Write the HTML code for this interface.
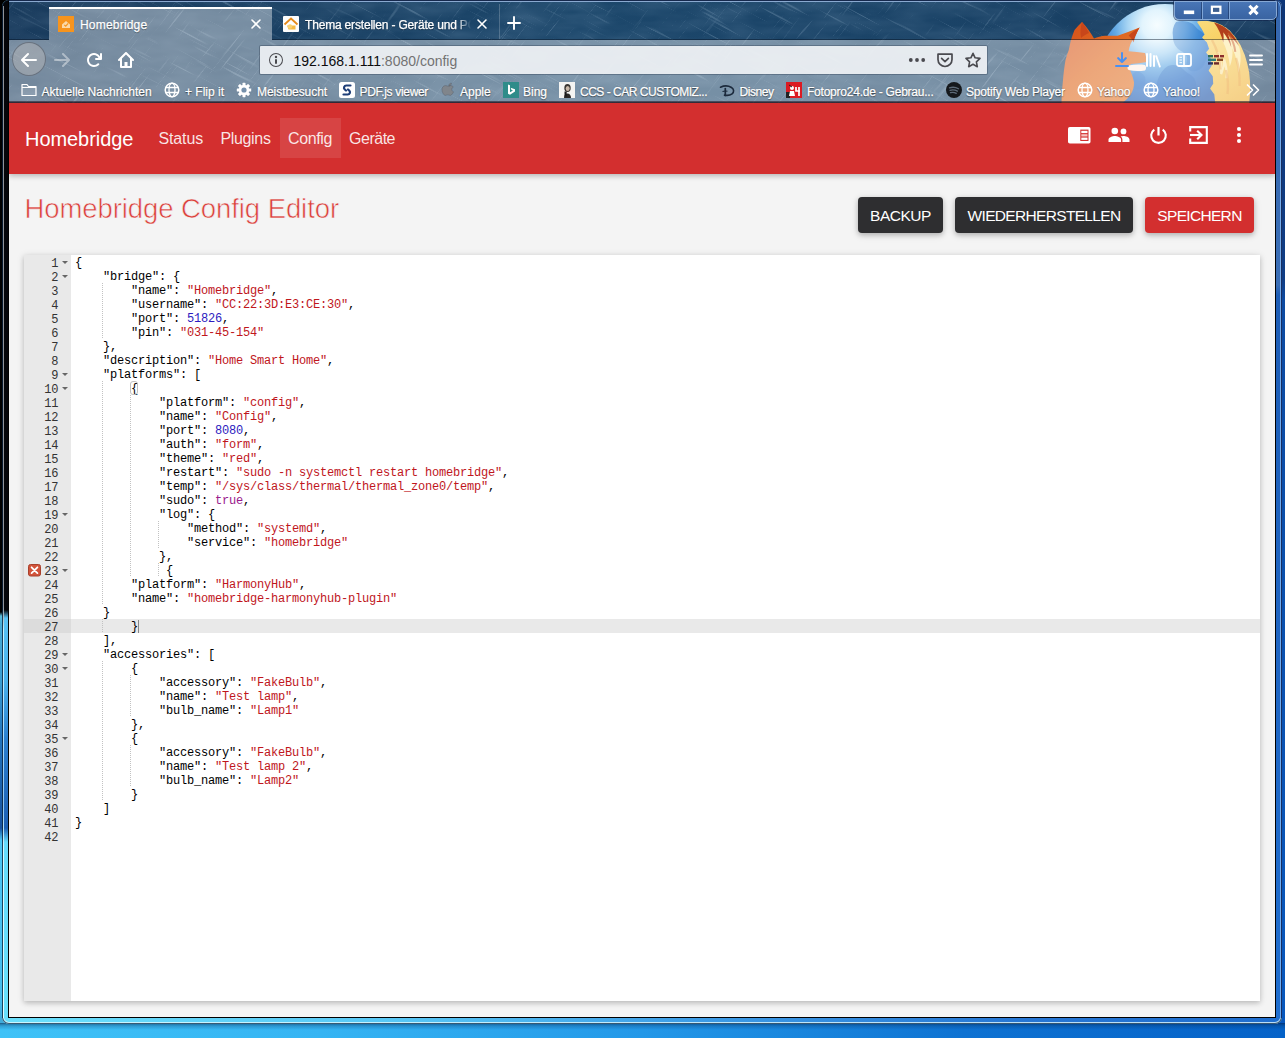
<!DOCTYPE html>
<html><head><meta charset="utf-8"><title>Homebridge</title>
<style>
*{box-sizing:border-box;margin:0;padding:0}
html,body{width:1285px;height:1038px;overflow:hidden;background:#1e9fe8;font-family:"Liberation Sans",sans-serif}
.abs{position:absolute}
#desk{position:absolute;left:0;top:0;width:1285px;height:1038px;background:linear-gradient(90deg,#3fc2f7 0%,#35b4f3 25%,#2398e8 50%,#0e72d2 75%,#0562c8 100%)}
#deskL{position:absolute;left:0;top:0;width:9px;height:1024px;background:linear-gradient(180deg,#000 0,#000 612px,#5cc0dc 616px,#48acd6 624px,#3a9ed2 680px,#2273bc 740px,#17529f 828px,#4cc6f4 840px,#45bcec 1000px,#3fa9d8 1024px)}
#deskR{position:absolute;left:1276px;top:0;width:9px;height:1024px;background:linear-gradient(180deg,#0d3577 0,#0f3d86 280px,#0c4aa2 300px,#0a52b2 700px,#0858be 1024px)}
#deskSh{position:absolute;left:0;top:1023px;width:1285px;height:7px;background:linear-gradient(180deg,rgba(0,30,70,.55),rgba(0,40,90,.22) 45%,rgba(0,40,90,0))}
#win{position:absolute;left:2px;top:0;width:1280px;height:1024px;border-radius:7px 7px 7px 7px;background:linear-gradient(90deg,#6be0fc 0%,#58c8f6 30%,#3c9be6 55%,#2676d4 80%,#1f6ecf 100%);box-shadow:inset 0 0 0 1px rgba(8,40,70,.75),inset 0 0 0 2px rgba(225,250,255,.8)}
#winL{position:absolute;left:2px;top:0;width:7px;height:1018px;border-radius:7px 0 0 0;background:linear-gradient(180deg,#05060a 0,#05060a 610px,#58c2f4 618px,#4ab4ee 680px,#2a7fd0 740px,#1c5fb4 828px,#66dcfc 842px,#68e0fc 1018px);box-shadow:inset 1px 0 0 rgba(8,30,55,.8)}
#winLh{position:absolute;left:3px;top:6px;width:1px;height:1012px;background:linear-gradient(180deg,#8e9297 0,#90949a 600px,#c8f4ff 625px,#b8e6ff 700px,#8fc4f0 800px,#d8faff 845px,#e0fbff 1012px)}
#winR{position:absolute;left:1275px;top:0;width:7px;height:1018px;border-radius:0 7px 0 0;background:linear-gradient(180deg,#3466ae 0,#3a6eb6 285px,#1d5db6 295px,#1f66c4 700px,#1f6ecf 1018px);box-shadow:inset -1px 0 0 rgba(8,25,70,.85),inset -2px 0 0 rgba(140,195,255,.75)}
#winIn{position:absolute;left:8px;top:1px;width:1268px;height:1017px;background:#000}
#chrome{position:absolute;left:9px;top:0;width:1266px;height:103px;background:#1d446f;overflow:hidden}
#navbar{position:absolute;left:0;top:40px;width:1266px;height:62px;background:rgba(255,255,255,.4)}
#navline{position:absolute;left:0;top:101px;width:1266px;height:2px;background:linear-gradient(180deg,rgba(30,35,50,.55),rgba(60,30,35,.8))}
#tab1{position:absolute;left:40px;top:7px;width:223px;height:33px;background:rgba(255,255,255,.4);border-top:2px solid #fff}
#tabsep{position:absolute;left:489.500px;top:4px;width:1px;height:35px;background:rgba(255,255,255,.2)}
#wc{position:absolute;left:1174px;top:1px;width:103px;height:19px;background:linear-gradient(180deg,#4976b6,#3f6bab 55%,#3a64a2);border:1px solid #86a8d4;border-radius:0 0 5px 5px;box-shadow:0 0 0 1px rgba(12,30,70,.55)}
#wc i{position:absolute;top:0;width:1px;height:17px;background:rgba(150,185,230,.75);box-shadow:-1px 0 0 rgba(10,30,70,.45)}
.tabtxt{position:absolute;color:#fff;font-size:12px;white-space:nowrap;text-shadow:0 1px 1px rgba(0,0,0,.45);-webkit-text-stroke:.25px #fff}
#url{position:absolute;left:251px;top:46px;width:727px;height:28px;background:rgba(238,241,244,.93);border-radius:1px;box-shadow:0 0 0 1px rgba(40,55,75,.35)}
#urltxt{left:284.500px;top:53px;font-size:14px;line-height:16px;color:#0c0c0d;white-space:nowrap}
#urltxt span{color:#737373}
.bm{position:absolute;top:84.700px;color:#fff;font-size:12px;line-height:14px;white-space:nowrap;text-shadow:0 1px 1px rgba(0,0,0,.5),0 0 2px rgba(0,0,0,.25);-webkit-text-stroke:.25px #fff}
#page{position:absolute;left:9px;top:103px;width:1266px;height:914px;background:#f4f4f4;overflow:hidden}
#hdr{position:absolute;left:0;top:0;width:1266px;height:70.800px;background:#d32f2f;box-shadow:0 2px 5px rgba(0,0,0,.2),0 1px 8px rgba(0,0,0,.08)}
#brand{position:absolute;left:16px;top:23.700px;color:#fff;font-size:20px;line-height:24px;white-space:nowrap;letter-spacing:-.06px}
.nav{position:absolute;top:27px;color:rgba(255,255,255,.88);font-size:16px;line-height:18px;white-space:nowrap}
#navact{position:absolute;left:270.500px;top:15px;width:61.500px;height:40px;background:rgba(255,255,255,.1)}
#ttl{position:absolute;left:15.500px;top:89px;color:#dc3f3a;-webkit-text-stroke:.6px #f4f4f4;font-size:27.500px;line-height:34px;white-space:nowrap;letter-spacing:-.08px}
.btn{position:absolute;top:94px;height:36px;border-radius:4px;color:#fff;font-size:15.500px;line-height:37px;text-align:center;white-space:nowrap;box-shadow:0 2px 5px rgba(0,0,0,.2),0 2px 8px rgba(0,0,0,.12)}
#ed{position:absolute;left:15px;top:152px;width:1236px;height:746px;background:#fff;box-shadow:0 2px 5px rgba(0,0,0,.18),0 1px 8px rgba(0,0,0,.1);overflow:hidden;font-family:"Liberation Mono",monospace;font-size:12px;letter-spacing:-.2px;line-height:14px}
#gut{position:absolute;left:0;top:0;width:47px;height:746px;background:#e9e9e9;color:#333}
.g{position:relative;height:14px;text-align:right;padding-right:12.800px;padding-top:1.500px}
.g.act{background:#dcdcdc}
.fw{position:absolute;right:3.500px;top:5.500px;width:0;height:0;border-left:3px solid transparent;border-right:3px solid transparent;border-top:3.600px solid #666}
.er{position:absolute;left:4px;top:.500px}
.ig{position:absolute;top:0;width:1px;height:14px;background:repeating-linear-gradient(180deg,#c2c2c2 0,#c2c2c2 1px,transparent 1px,transparent 2px)}
.bmx{position:absolute;left:59px;top:0;width:7.500px;height:14px;border:1px solid #c0c0c0;border-radius:3px}
#code{position:absolute;left:47px;top:0;width:1189px;height:746px;color:#000}
.l{position:relative;height:14px;padding-left:4px;padding-top:1px;white-space:pre}
.l.act{background:#e9e9e9}
#cursor{position:absolute;left:114px;top:365px;width:1px;height:13px;background:#888}
.k{color:#000}.s{color:#c0161c}.n{color:#2d1cc0}.b{color:#9a1a8c}
</style></head><body>
<div id="desk"></div><div id="deskL"></div><div id="deskR"></div><div id="deskSh"></div>
<div id="win"></div><div id="winL"></div><div id="winR"></div><div id="winLh"></div><div id="winIn"></div>
<div id="chrome">
<svg class="abs" style="left:0;top:0" width="1266" height="103" viewBox="9 0 1266 103">
<defs>
<filter id="tx" x="0" y="0" width="100%" height="100%"><feTurbulence type="fractalNoise" baseFrequency="0.02 0.07" numOctaves="3" seed="7"/><feColorMatrix type="matrix" values="0 0 0 0 0.55  0 0 0 0 0.72  0 0 0 0 0.9  0.9 0.9 0 0 -0.62"/></filter>
<filter id="sc1" x="0" y="0" width="100%" height="100%"><feTurbulence type="fractalNoise" baseFrequency="0.018 0.4" numOctaves="2" seed="3"/><feColorMatrix type="matrix" values="0 0 0 0 0.62  0 0 0 0 0.78  0 0 0 0 0.92  6 0 0 0 -3.900"/></filter>
<filter id="sc2" x="0" y="0" width="100%" height="100%"><feTurbulence type="fractalNoise" baseFrequency="0.022 0.45" numOctaves="2" seed="11"/><feColorMatrix type="matrix" values="0 0 0 0 0.62  0 0 0 0 0.78  0 0 0 0 0.92  6 0 0 0 -3.950"/></filter>
<clipPath id="cc"><rect x="9" y="0" width="1266" height="103"/></clipPath>
<radialGradient id="gl" cx="1157" cy="25" r="88" gradientUnits="userSpaceOnUse"><stop offset="0" stop-color="#f6fdff"/><stop offset=".17" stop-color="#e2f4fd"/><stop offset=".33" stop-color="#a8d5f4"/><stop offset=".48" stop-color="#62a9e4"/><stop offset=".68" stop-color="#2f76cd"/><stop offset="1" stop-color="#1f55a8"/></radialGradient>
<linearGradient id="fx" x1="1070" y1="20" x2="1140" y2="100" gradientUnits="userSpaceOnUse"><stop offset="0" stop-color="#d6501a"/><stop offset=".5" stop-color="#e06c22"/><stop offset="1" stop-color="#e57e34"/></linearGradient>
<linearGradient id="tl" x1="1200" y1="20" x2="1250" y2="100" gradientUnits="userSpaceOnUse"><stop offset="0" stop-color="#fadb7c"/><stop offset=".5" stop-color="#f6c952"/><stop offset="1" stop-color="#f0b038"/></linearGradient>
</defs>
<linearGradient id="bgx" x1="9" y1="0" x2="1275" y2="0" gradientUnits="userSpaceOnUse"><stop offset="0" stop-color="#17395b"/><stop offset=".45" stop-color="#1c476b"/><stop offset=".8" stop-color="#1a4266"/><stop offset="1" stop-color="#163a5d"/></linearGradient>
<rect x="9" y="0" width="1266" height="103" fill="url(#bgx)"/>
<rect x="9" y="0" width="1266" height="103" filter="url(#tx)" opacity=".16"/>
<g clip-path="url(#cc)" opacity=".2"><rect x="-200" y="-700" width="1800" height="1500" filter="url(#sc1)" transform="rotate(28 640 50)"/><rect x="-200" y="-700" width="1800" height="1500" filter="url(#sc2)" transform="rotate(-52 640 50)"/></g>
<rect x="9" y="0" width="1266" height="1" fill="#16294d"/><rect x="9" y="1" width="1266" height="1" fill="#8aa9d0"/>
<!-- firefox logo -->
<g id="logo">
<circle cx="1165" cy="72" r="68" fill="url(#gl)"/>
<path d="M1176 22c6-2 12-1 17 2 3 3 5 6 9 8 3 3 5 7 6 11 1 8-1 15-4 22-3 5-8 7-13 6-4-2-5-6-4-10 1-5-2-8-6-10-5-3-8-8-8-14-1-6 0-11 3-15z" fill="#1560c0" opacity=".38"/>
<path d="M1168 66c5-2 11-1 15 3 3 4 8 5 11 9 3 5 3 11 1 17l-3 8h-36c-1-8-1-16 2-24 2-5 5-10 10-13z" fill="#1258b6" opacity=".4"/>
<path d="M1135 72c4-1 8 1 10 5 1 4 0 8-3 11-3 2-7 2-9-1-3-4-2-9 0-13z" fill="#1a62c0" opacity=".3"/>
<!-- fox body -->
<path d="M1061.500 103c.2-8 .7-15.500 1.500-23 .6-7 1.400-13.500 2.500-20 .9-3.500 2-6.800 3.300-10 .6-3.500 1.300-6.800 2.200-10 1-3.500 2.200-6.800 3.500-10 2.200-2.800 4.700-5.500 7.500-8 4.500 5 8.500 10.500 12 16.400 3.500-1.500 7-2.400 11-2.700h12.700c7.500-2.700 14.500-5.500 21.900-8.300-1.500 2.500-2.700 5-3.600 7.300-2.200 3-4 6-5.500 9.200-.8 2.400-1.500 4.800-1.900 7.300 5.500.4 11 1 16.400 1.800.9 3 1.500 6 2 9-5.500 1-11 1.700-16.500 2 0 2.500 0 5 0 7.300 1.700 3.700 2.900 7.300 3.500 11 .2 4.300-1 8.500-3.500 12.700-2.200 2.700-4.700 5.200-7.500 7.400z" fill="url(#fx)"/>
<path d="M1082 22c2.500 3 5 7 7 11-3 1-6 3-8 5-1-5-.5-11 1-16z" fill="#c8461a"/>
<path d="M1139.600 27.400c-4 2-8 5-11 8 2 2 4 4 5 7 1-5 3-10 6-15z" fill="#c8461a"/>
<path d="M1128.600 65.500c5-1 11-1.200 16.400-.5 1.500 1.500 1.500 4 0 5.400-5.400.8-11 .8-16.400-.4-1.500-1.300-1.500-3.200 0-4.500z" fill="#fff1e6"/>
<!-- tail -->
<path d="M1198 22L1206 21.500L1214.600 22.900L1222 26L1229 31L1235 38L1240 45.700L1244 55L1246.600 64L1248.500 73L1249.300 82.300L1249.500 92L1248.400 103L1216 103L1215 94L1211 88.500L1214 84L1213.500 76L1209.500 70.500L1212.500 66L1211.500 58L1207 52.500L1210 49L1207.500 42L1203 37.500L1205.500 34.500L1202 28Z" fill="url(#tl)" stroke="url(#tl)" stroke-width="1.500" stroke-linejoin="round"/>
<path d="M1222 40c4.500 8 7.200 17 7.800 26.500 2.300-5.800 3.200-12 2.600-18.300 3.600 7.800 5.600 16.200 5.800 24.800 2.600-7.700 3.200-16 1.600-24-2.500-8.700-7.500-16.500-14.300-22-1.600 4.200-2.800 8.500-3.500 13z" fill="#fdeeb4" opacity=".85"/>
<path d="M1218 52c2.500 7 3.600 14.500 3.200 22 2-4.500 3-9.300 3-14.300 2 6 2.800 12.300 2.400 18.600" fill="none" stroke="#fef4cc" stroke-width="2.200" opacity=".7"/>
<path d="M1214 22.500c6 1.700 11.500 4.800 16 9 4 4.200 7 9.200 9 14.700-3-4.500-6.700-8.300-11-11.500 1.800 4 2.900 8.300 3.300 12.800-1.800-5.500-4.500-10.700-8-15.300.5 3.500.5 7 0 10.500-1.700-7.500-5-14.500-9.300-20.200z" fill="#b23f1b"/>
<path d="M1228 33c4 5.500 6.500 12 7.300 18.800" fill="none" stroke="#c85a24" stroke-width="2" opacity=".8"/>
<path d="M1212 40c5 9 8 19 8.500 29.500M1236 58c3 9 4 18.500 3.500 28M1226 70c2 8 2.500 16 1.500 24" fill="none" stroke="#e8962e" stroke-width="2.400" opacity=".55"/>
</g>
</svg>
<div id="navbar"></div>
<div id="navline"></div><div class="abs" style="left:0;top:39px;width:40px;height:1px;background:rgba(5,15,30,.45)"></div><div class="abs" style="left:263px;top:39px;width:1003px;height:1px;background:rgba(5,15,30,.45)"></div>
<div id="tab1"></div>
<div id="tabsep"></div>
<!-- tab 1 -->
<div class="abs" style="left:49px;top:16px;width:16px;height:16px;background:#f7941d"></div>
<svg class="abs" style="left:49px;top:16px" width="16" height="16" viewBox="0 0 16 16"><path d="M4 8.500l4-3.500 4 3.500v3.500h-8z" fill="#fbd9a8"/><path d="M6.300 8.800l1.400 1.400 2.500-2.800" stroke="#f7941d" stroke-width="1.200" fill="none"/></svg>
<div class="tabtxt" style="left:71px;top:18px;letter-spacing:.2px">Homebridge</div>
<svg class="abs x" style="left:241px;top:18px" width="12" height="12" viewBox="0 0 12 12"><path d="M2 2l8 8M10 2l-8 8" stroke="#fff" stroke-width="1.600" stroke-linecap="round"/></svg>
<!-- tab 2 -->
<div class="abs" style="left:274px;top:16px;width:16px;height:16px;background:#fdfdfd;border-radius:1px"></div>
<svg class="abs" style="left:274px;top:16px" width="16" height="16" viewBox="0 0 16 16"><path d="M1.500 8.500L8 2.500l6.500 6" stroke="#e58a1a" stroke-width="1.800" fill="none"/><path d="M4 9.500h8.500v4H5.500z" fill="#f5b942"/><circle cx="7" cy="10.500" r="2.200" fill="#f8d070"/></svg>
<div class="tabtxt" style="left:296px;top:18px;letter-spacing:-.18px;width:168px;overflow:hidden;-webkit-mask-image:linear-gradient(90deg,#000 152px,transparent 166px);mask-image:linear-gradient(90deg,#000 152px,transparent 166px)">Thema erstellen - Geräte und PC</div>
<svg class="abs x" style="left:467px;top:18px" width="12" height="12" viewBox="0 0 12 12"><path d="M2 2l8 8M10 2l-8 8" stroke="#fff" stroke-width="1.600" stroke-linecap="round"/></svg>
<svg class="abs" style="left:498px;top:16px" width="14" height="14" viewBox="0 0 14 14"><path d="M7 1v12M1 7h12" stroke="#fff" stroke-width="1.900" stroke-linecap="round"/></svg>
<!-- nav buttons -->
<div class="abs" style="left:3px;top:42px;width:34px;height:34px;border-radius:17px;background:rgba(205,198,192,.36);border:1px solid rgba(40,50,65,.42)"></div>
<svg class="abs" style="left:12px;top:52px" width="16" height="16" viewBox="0 0 16 16"><path d="M15 7H3.414l4.293-4.293a1 1 0 0 0-1.414-1.414l-6 6a1 1 0 0 0 0 1.414l6 6a1 1 0 0 0 1.414-1.414L3.414 9H15a1 1 0 0 0 0-2z" fill="#fff"/></svg>
<svg class="abs" style="left:45px;top:52px;opacity:.42" width="16" height="16" viewBox="0 0 16 16"><path transform="translate(16,0) scale(-1,1)" d="M15 7H3.414l4.293-4.293a1 1 0 0 0-1.414-1.414l-6 6a1 1 0 0 0 0 1.414l6 6a1 1 0 0 0 1.414-1.414L3.414 9H15a1 1 0 0 0 0-2z" fill="#fff"/></svg>
<svg class="abs" style="left:77px;top:52px" width="16" height="16" viewBox="0 0 16 16"><path d="M15 1a1 1 0 0 0-1 1v2.418A6.995 6.995 0 1 0 8 15a6.954 6.954 0 0 0 4.950-2.050 1 1 0 0 0-1.414-1.414A5.019 5.019 0 1 1 12.549 6H10a1 1 0 0 0 0 2h5a1 1 0 0 0 1-1V2a1 1 0 0 0-1-1z" fill="#fff"/></svg>
<svg class="abs" style="left:109px;top:52px" width="16" height="16" viewBox="0 0 16 16"><path d="M15.707 7.293l-7-7a1 1 0 0 0-1.414 0l-7 7a1 1 0 0 0 1.414 1.414L2 8.414V15a1 1 0 0 0 1 1h10a1 1 0 0 0 1-1V8.414l.293.293a1 1 0 0 0 1.414-1.414zM12 14H9.500v-4h-3v4H4V6.414l4-4 4 4z" fill="#fff"/></svg>
<!-- url bar -->
<div id="url"></div>
<svg class="abs" style="left:259px;top:52px" width="16" height="16" viewBox="0 0 16 16"><path d="M8 1a7 7 0 1 0 7 7 7.008 7.008 0 0 0-7-7zm0 13a6 6 0 1 1 6-6 6.007 6.007 0 0 1-6 6zm0-7a1 1 0 0 0-1 1v3a1 1 0 0 0 2 0V8a1 1 0 0 0-1-1zm0-3.188A1.188 1.188 0 1 0 9.188 5 1.188 1.188 0 0 0 8 3.812z" fill="#4a4a4f"/></svg>
<div class="abs" id="urltxt">192.168.1.111<span>:8080/config</span></div>
<svg class="abs" style="left:899px;top:52px" width="18" height="16" viewBox="0 0 18 16"><circle cx="2.800" cy="8" r="1.900" fill="#4a4a4f"/><circle cx="9" cy="8" r="1.900" fill="#4a4a4f"/><circle cx="15.200" cy="8" r="1.900" fill="#4a4a4f"/></svg>
<svg class="abs" style="left:928px;top:52px" width="16" height="16" viewBox="0 0 16 16"><path d="M1 2.200h14v5.300a7 7 0 0 1-14 0z" fill="none" stroke="#4a4a4f" stroke-width="1.700" stroke-linejoin="round"/><path d="M4.600 6.300L8 9.600l3.400-3.300" fill="none" stroke="#4a4a4f" stroke-width="1.700" stroke-linecap="round" stroke-linejoin="round"/></svg>
<svg class="abs" style="left:956px;top:52px" width="16" height="16" viewBox="0 0 16 16"><path d="M8 1.300l2.100 4.500 4.900.6-3.600 3.400.9 4.900L8 12.300l-4.300 2.400.9-4.900L1 6.400l4.900-.6z" fill="none" stroke="#4a4a4f" stroke-width="1.600" stroke-linejoin="round"/></svg>
<!-- right toolbar icons -->
<svg class="abs" style="left:1105px;top:52px" width="16" height="16" viewBox="0 0 16 16"><path d="M8 11a1 1 0 0 1-.7-.3l-4-4a1 1 0 0 1 1.400-1.400L7 7.600V1a1 1 0 0 1 2 0v6.600l2.300-2.300a1 1 0 0 1 1.400 1.400l-4 4a1 1 0 0 1-.7.300z M14 15H2a1 1 0 0 1 0-2h12a1 1 0 0 1 0 2z" fill="#4a90f0"/></svg>
<svg class="abs" style="left:1136px;top:52px" width="16" height="16" viewBox="0 0 16 16"><rect x="1" y="1" width="2" height="14" rx="1" fill="#fff"/><rect x="4.500" y="1" width="2" height="14" rx="1" fill="#fff"/><rect x="8" y="3" width="2" height="12" rx="1" fill="#fff"/><path d="M11.300 4.200l3.500 10.300" stroke="#fff" stroke-width="1.900" stroke-linecap="round"/></svg>
<svg class="abs" style="left:1167px;top:52px" width="16" height="16" viewBox="0 0 16 16"><rect x="1" y="2" width="14" height="12" rx="2" fill="none" stroke="#fff" stroke-width="1.800"/><path d="M8 2v12" stroke="#fff" stroke-width="1.600"/><path d="M3.500 5.300h2.500M3.500 8h2.500M3.500 10.700h2.500" stroke="#fff" stroke-width="1"/></svg>
<svg class="abs" style="left:1198px;top:53px" width="18" height="14" viewBox="0 0 18 14"><rect x="1" y="2" width="5" height="2.400" fill="#2f6f5a"/><rect x="7" y="2" width="5" height="2.400" fill="#8c2f2c"/><rect x="13" y="2" width="4" height="2.400" fill="#8c2f2c"/><rect x="1" y="5.600" width="8" height="2.400" fill="#2d7a78"/><rect x="10" y="5.600" width="6" height="2.400" fill="#8a4a26"/><rect x="1" y="9.200" width="5" height="2.400" fill="#2b3562"/><rect x="7" y="9.200" width="5" height="2.400" fill="#6e2a2a"/></svg>
<svg class="abs" style="left:1239px;top:52px" width="16" height="16" viewBox="0 0 16 16"><path d="M2 3.500h12M2 8h12M2 12.500h12" stroke="#fff" stroke-width="1.900" stroke-linecap="round"/></svg>
<svg class="abs" style="left:12px;top:82px" width="16" height="16" viewBox="0 0 16 16"><path d="M1 13.500v-11h5l1.500 2H15v9z" fill="rgba(255,255,255,.12)" stroke="#fff" stroke-width="1.200" stroke-linejoin="round"/><path d="M1 5.500h14" stroke="#fff" stroke-width="1"/></svg>
<div class="bm" style="left:32.6px">Aktuelle Nachrichten</div>
<svg class="abs" style="left:155px;top:82px" width="16" height="16" viewBox="0 0 16 16"><circle cx="8" cy="8" r="6.800" fill="none" stroke="#fff" stroke-width="1.500"/><ellipse cx="8" cy="8" rx="3" ry="6.800" fill="none" stroke="#fff" stroke-width="1.300"/><path d="M1.800 5.500h12.400M1.800 10.500h12.400" stroke="#fff" stroke-width="1.300"/></svg>
<div class="bm" style="left:176px">+ Flip it</div>
<svg class="abs" style="left:227px;top:82px" width="16" height="16" viewBox="0 0 16 16"><g transform="translate(8,8)"><g fill="#fff"><rect x="-1.500" y="-7.200" width="3" height="14.400" rx=".6"/><rect x="-1.500" y="-7.200" width="3" height="14.400" rx=".6" transform="rotate(45)"/><rect x="-1.500" y="-7.200" width="3" height="14.400" rx=".6" transform="rotate(90)"/><rect x="-1.500" y="-7.200" width="3" height="14.400" rx=".6" transform="rotate(135)"/><circle r="5.200"/></g><circle r="2.600" fill="#7590ab"/></g></svg>
<div class="bm" style="left:248px;letter-spacing:-0.05px">Meistbesucht</div>
<svg class="abs" style="left:330px;top:82px" width="16" height="16" viewBox="0 0 16 16"><rect width="16" height="16" rx="2.500" fill="#fff"/><path d="M11.500 3.500H7.200a2.200 2.200 0 0 0-1.600 3.700L7 8.500M4.500 12.500h4.300a2.200 2.200 0 0 0 1.600-3.700L9 7.500" fill="none" stroke="#1f3f78" stroke-width="2.200" stroke-linecap="round"/></svg>
<div class="bm" style="left:350.5px;letter-spacing:-0.32px">PDF.js viewer</div>
<svg class="abs" style="left:431px;top:82px" width="16" height="16" viewBox="0 0 16 16"><path d="M10.800 1.200c.1 1-.3 1.900-.9 2.500-.6.700-1.500 1.100-2.300 1-.1-.9.300-1.900.9-2.500.6-.6 1.600-1 2.300-1zM13.300 11.600c-.4.900-.6 1.300-1.100 2-.7 1.100-1.700 2.400-2.900 2.400-1.100 0-1.400-.7-2.800-.7-1.500 0-1.800.7-2.900.7-1.200 0-2.100-1.200-2.800-2.300C-.9 10.900-1 7.600.4 6c.9-1.100 2.100-1.700 3.300-1.700 1.300 0 2.100.7 3.100.7s1.700-.7 3.200-.7c1.100 0 2.200.6 3 1.600-2.600 1.500-2.200 5.200.3 5.700z" transform="translate(2.400,0) scale(.84)" fill="#80858b" stroke="rgba(50,60,72,.45)" stroke-width=".6"/></svg>
<div class="bm" style="left:451px">Apple</div>
<svg class="abs" style="left:494px;top:82px" width="16" height="16" viewBox="0 0 16 16"><rect width="16" height="16" fill="#2f8c8a"/><path d="M5 2.500l2 .7v7l3-1.600-1.500-.7-.9-2.200 4.400 1.500v2.300L7 12.800l-2-1.100z" fill="#fff"/></svg>
<div class="bm" style="left:514px">Bing</div>
<svg class="abs" style="left:550px;top:82px" width="16" height="16" viewBox="0 0 16 16"><rect width="16" height="16" fill="#f4f4f2"/><ellipse cx="8.500" cy="6" rx="3.200" ry="4" fill="#3a3632"/><ellipse cx="8.700" cy="6.500" rx="2" ry="2.600" fill="#c9b8a8"/><path d="M5 16c0-3 1.500-4.500 3.500-4.500S12 13 12 16z" fill="#2a2826"/><rect x="5.500" y="9.500" width="2.200" height="5" fill="#1a1a1a"/></svg>
<div class="bm" style="left:571px;letter-spacing:-0.48px">CCS - CAR CUSTOMIZ...</div>
<svg class="abs" style="left:710px;top:82px" width="16" height="16" viewBox="0 0 16 16"><path d="M1.500 5.200C5 3.600 9.500 3.700 12.500 5.500c2.600 1.600 2.800 4.600.6 6.300-2 1.500-5 1.900-7.600 1.300" fill="none" stroke="#1c2a3c" stroke-width="1.600" stroke-linecap="round"/><path d="M6.300 6.500v7" stroke="#1c2a3c" stroke-width="1.700" stroke-linecap="round"/><path d="M3.500 9.500c1.500-.5 3.500-.6 5-.2" stroke="#1c2a3c" stroke-width="1.100" fill="none"/></svg>
<div class="bm" style="left:730.6px;letter-spacing:-0.45px">Disney</div>
<svg class="abs" style="left:777px;top:82px" width="16" height="16" viewBox="0 0 16 16"><rect width="16" height="16" fill="#dc1a22"/><rect x="0" y="10" width="4" height="6" fill="#222"/><circle cx="6" cy="6" r="2" fill="#fff"/><path d="M4 9h4l1 5H3z" fill="#fff"/><path d="M10 5v4h4M13 5v9" stroke="#fff" stroke-width="1.700" fill="none"/><path d="M3 3l3 2" stroke="#222" stroke-width="1"/></svg>
<div class="bm" style="left:798px;letter-spacing:-0.23px">Fotopro24.de - Gebrau...</div>
<svg class="abs" style="left:937px;top:82px" width="16" height="16" viewBox="0 0 16 16"><circle cx="8" cy="8" r="8" fill="#15181c"/><path d="M3.500 5.800c3-.9 6.300-.6 9 .9M4 8.300c2.500-.7 5.200-.4 7.400.8M4.500 10.700c2-.5 4-.3 5.800.6" fill="none" stroke="#5d6a78" stroke-width="1.300" stroke-linecap="round"/></svg>
<div class="bm" style="left:957px;letter-spacing:-0.16px">Spotify Web Player</div>
<svg class="abs" style="left:1068px;top:82px" width="16" height="16" viewBox="0 0 16 16"><circle cx="8" cy="8" r="6.800" fill="none" stroke="#fff" stroke-width="1.500"/><ellipse cx="8" cy="8" rx="3" ry="6.800" fill="none" stroke="#fff" stroke-width="1.300"/><path d="M1.800 5.500h12.400M1.800 10.500h12.400" stroke="#fff" stroke-width="1.300"/></svg>
<div class="bm" style="left:1088px;letter-spacing:-0.1px">Yahoo</div>
<svg class="abs" style="left:1134px;top:82px" width="16" height="16" viewBox="0 0 16 16"><circle cx="8" cy="8" r="6.800" fill="none" stroke="#fff" stroke-width="1.500"/><ellipse cx="8" cy="8" rx="3" ry="6.800" fill="none" stroke="#fff" stroke-width="1.300"/><path d="M1.800 5.500h12.400M1.800 10.500h12.400" stroke="#fff" stroke-width="1.300"/></svg>
<div class="bm" style="left:1154px">Yahoo!</div>
<svg class="abs" style="left:1236px;top:83px" width="16" height="14" viewBox="0 0 16 14"><path d="M2.500 2l5 5-5 5M8.500 2l5 5-5 5" fill="none" stroke="#fff" stroke-width="1.700" stroke-linecap="round" stroke-linejoin="round"/></svg>

</div>
<div id="page">
<div id="hdr">
<div id="navact"></div>
<div id="brand">Homebridge</div>
<div class="nav" style="left:149.500px;letter-spacing:-.14px">Status</div>
<div class="nav" style="left:211.500px;letter-spacing:-.35px">Plugins</div>
<div class="nav" style="left:279px;letter-spacing:-.37px">Config</div>
<div class="nav" style="left:340px;letter-spacing:-.48px">Geräte</div>
<!-- header icons (page-relative: abs x - 9, abs y - 103) -->
<svg class="abs" style="left:1059px;top:24px" width="23" height="17" viewBox="0 0 23 17"><rect x="0" y="0" width="22.500" height="16.500" rx="1.800" fill="#fff"/><rect x="12.300" y="2.600" width="8.200" height="11.400" fill="#d32f2f"/><rect x="13.300" y="3.800" width="6.200" height="2.300" fill="#fff"/><rect x="13.300" y="7.200" width="6.200" height="2.300" fill="#f7c4c0"/><rect x="13.300" y="10.600" width="6.200" height="2.300" fill="#fff"/></svg>
<svg class="abs" style="left:1099px;top:24px" width="22" height="16" viewBox="0 0 22 16"><circle cx="6.800" cy="4" r="3.300" fill="#fff"/><circle cx="15.500" cy="4.400" r="2.900" fill="#fff"/><path d="M.5 15v-2.200c0-2.500 4.200-3.700 6.300-3.700s6.300 1.200 6.300 3.700V15z" fill="#fff"/><path d="M14.200 9.200c.5-.1.900-.1 1.300-.1 2 0 6 1.100 6 3.500V15h-7.100v-2.400c0-1.400-.8-2.500-1.800-3.200.5-.1 1.100-.2 1.600-.2z" fill="#fff"/></svg>
<svg class="abs" style="left:1140px;top:23px" width="19" height="18" viewBox="0 0 19 18"><path d="M9.500 1v8.500" stroke="#fff" stroke-width="2.200" stroke-linecap="butt" fill="none"/><path d="M5.300 3.600a7.300 7.300 0 1 0 8.400 0" stroke="#fff" stroke-width="2.100" fill="none" stroke-linecap="butt"/></svg>
<svg class="abs" style="left:1180px;top:23px" width="19" height="18" viewBox="0 0 19 18"><path d="M1.200 5.500V1.100h16.600v15.800H1.200v-4.400" fill="none" stroke="#fff" stroke-width="2.100"/><path d="M1 9h10.500" stroke="#fff" stroke-width="2.100"/><path d="M8.200 4.800l4.300 4.200-4.300 4.200" fill="none" stroke="#fff" stroke-width="2.100"/></svg>
<svg class="abs" style="left:1226px;top:23px" width="8" height="18" viewBox="0 0 8 18"><circle cx="4" cy="3" r="2.050" fill="#fff"/><circle cx="4" cy="9" r="2.050" fill="#fff"/><circle cx="4" cy="15" r="2.050" fill="#fff"/></svg>
</div>
<div id="ttl">Homebridge Config Editor</div>
<div class="btn" style="left:849px;width:85px;background:#2e2e30;letter-spacing:-.49px">BACKUP</div>
<div class="btn" style="left:946px;width:178px;background:#2e2e30;letter-spacing:-.67px">WIEDERHERSTELLEN</div>
<div class="btn" style="left:1136px;width:109px;background:#d32f2f;letter-spacing:-.68px">SPEICHERN</div>
<div id="ed">
<div id="code">
<div class="l">{</div>
<div class="l">    <span class="k">&quot;bridge&quot;</span>: {</div>
<div class="l"><i class="ig" style="left:31px"></i>        <span class="k">&quot;name&quot;</span>: <span class="s">&quot;Homebridge&quot;</span>,</div>
<div class="l"><i class="ig" style="left:31px"></i>        <span class="k">&quot;username&quot;</span>: <span class="s">&quot;CC:22:3D:E3:CE:30&quot;</span>,</div>
<div class="l"><i class="ig" style="left:31px"></i>        <span class="k">&quot;port&quot;</span>: <span class="n">51826</span>,</div>
<div class="l"><i class="ig" style="left:31px"></i>        <span class="k">&quot;pin&quot;</span>: <span class="s">&quot;031-45-154&quot;</span></div>
<div class="l">    },</div>
<div class="l">    <span class="k">&quot;description&quot;</span>: <span class="s">&quot;Home Smart Home&quot;</span>,</div>
<div class="l">    <span class="k">&quot;platforms&quot;</span>: [</div>
<div class="l"><i class="ig" style="left:31px"></i><i class="bmx"></i>        {</div>
<div class="l"><i class="ig" style="left:31px"></i><i class="ig" style="left:59px"></i>            <span class="k">&quot;platform&quot;</span>: <span class="s">&quot;config&quot;</span>,</div>
<div class="l"><i class="ig" style="left:31px"></i><i class="ig" style="left:59px"></i>            <span class="k">&quot;name&quot;</span>: <span class="s">&quot;Config&quot;</span>,</div>
<div class="l"><i class="ig" style="left:31px"></i><i class="ig" style="left:59px"></i>            <span class="k">&quot;port&quot;</span>: <span class="n">8080</span>,</div>
<div class="l"><i class="ig" style="left:31px"></i><i class="ig" style="left:59px"></i>            <span class="k">&quot;auth&quot;</span>: <span class="s">&quot;form&quot;</span>,</div>
<div class="l"><i class="ig" style="left:31px"></i><i class="ig" style="left:59px"></i>            <span class="k">&quot;theme&quot;</span>: <span class="s">&quot;red&quot;</span>,</div>
<div class="l"><i class="ig" style="left:31px"></i><i class="ig" style="left:59px"></i>            <span class="k">&quot;restart&quot;</span>: <span class="s">&quot;sudo -n systemctl restart homebridge&quot;</span>,</div>
<div class="l"><i class="ig" style="left:31px"></i><i class="ig" style="left:59px"></i>            <span class="k">&quot;temp&quot;</span>: <span class="s">&quot;/sys/class/thermal/thermal_zone0/temp&quot;</span>,</div>
<div class="l"><i class="ig" style="left:31px"></i><i class="ig" style="left:59px"></i>            <span class="k">&quot;sudo&quot;</span>: <span class="b">true</span>,</div>
<div class="l"><i class="ig" style="left:31px"></i><i class="ig" style="left:59px"></i>            <span class="k">&quot;log&quot;</span>: {</div>
<div class="l"><i class="ig" style="left:31px"></i><i class="ig" style="left:59px"></i><i class="ig" style="left:87px"></i>                <span class="k">&quot;method&quot;</span>: <span class="s">&quot;systemd&quot;</span>,</div>
<div class="l"><i class="ig" style="left:31px"></i><i class="ig" style="left:59px"></i><i class="ig" style="left:87px"></i>                <span class="k">&quot;service&quot;</span>: <span class="s">&quot;homebridge&quot;</span></div>
<div class="l"><i class="ig" style="left:31px"></i><i class="ig" style="left:59px"></i>            },</div>
<div class="l"><i class="ig" style="left:31px"></i><i class="ig" style="left:59px"></i><i class="ig" style="left:87px"></i>             {</div>
<div class="l"><i class="ig" style="left:31px"></i>        <span class="k">&quot;platform&quot;</span>: <span class="s">&quot;HarmonyHub&quot;</span>,</div>
<div class="l"><i class="ig" style="left:31px"></i>        <span class="k">&quot;name&quot;</span>: <span class="s">&quot;homebridge-harmonyhub-plugin&quot;</span></div>
<div class="l">    }</div>
<div class="l act"><i class="ig" style="left:31px"></i>        }</div>
<div class="l">    ],</div>
<div class="l">    <span class="k">&quot;accessories&quot;</span>: [</div>
<div class="l"><i class="ig" style="left:31px"></i>        {</div>
<div class="l"><i class="ig" style="left:31px"></i><i class="ig" style="left:59px"></i>            <span class="k">&quot;accessory&quot;</span>: <span class="s">&quot;FakeBulb&quot;</span>,</div>
<div class="l"><i class="ig" style="left:31px"></i><i class="ig" style="left:59px"></i>            <span class="k">&quot;name&quot;</span>: <span class="s">&quot;Test lamp&quot;</span>,</div>
<div class="l"><i class="ig" style="left:31px"></i><i class="ig" style="left:59px"></i>            <span class="k">&quot;bulb_name&quot;</span>: <span class="s">&quot;Lamp1&quot;</span></div>
<div class="l"><i class="ig" style="left:31px"></i>        },</div>
<div class="l"><i class="ig" style="left:31px"></i>        {</div>
<div class="l"><i class="ig" style="left:31px"></i><i class="ig" style="left:59px"></i>            <span class="k">&quot;accessory&quot;</span>: <span class="s">&quot;FakeBulb&quot;</span>,</div>
<div class="l"><i class="ig" style="left:31px"></i><i class="ig" style="left:59px"></i>            <span class="k">&quot;name&quot;</span>: <span class="s">&quot;Test lamp 2&quot;</span>,</div>
<div class="l"><i class="ig" style="left:31px"></i><i class="ig" style="left:59px"></i>            <span class="k">&quot;bulb_name&quot;</span>: <span class="s">&quot;Lamp2&quot;</span></div>
<div class="l"><i class="ig" style="left:31px"></i>        }</div>
<div class="l">    ]</div>
<div class="l">}</div>
<div class="l"></div>
</div>
<div id="gut">
<div class="g"><span>1</span><i class="fw"></i></div>
<div class="g"><span>2</span><i class="fw"></i></div>
<div class="g"><span>3</span></div>
<div class="g"><span>4</span></div>
<div class="g"><span>5</span></div>
<div class="g"><span>6</span></div>
<div class="g"><span>7</span></div>
<div class="g"><span>8</span></div>
<div class="g"><span>9</span><i class="fw"></i></div>
<div class="g"><span>10</span><i class="fw"></i></div>
<div class="g"><span>11</span></div>
<div class="g"><span>12</span></div>
<div class="g"><span>13</span></div>
<div class="g"><span>14</span></div>
<div class="g"><span>15</span></div>
<div class="g"><span>16</span></div>
<div class="g"><span>17</span></div>
<div class="g"><span>18</span></div>
<div class="g"><span>19</span><i class="fw"></i></div>
<div class="g"><span>20</span></div>
<div class="g"><span>21</span></div>
<div class="g"><span>22</span></div>
<div class="g"><svg class="er" width="13" height="13" viewBox="0 0 13 13"><rect x=".5" y=".5" width="12" height="11.500" rx="2" fill="#d2533a" stroke="#a8412c"/><path d="M3.600 3.300l5.800 5.800M9.400 3.300L3.600 9.100" stroke="#fff" stroke-width="1.800" stroke-linecap="round"/></svg><span>23</span><i class="fw"></i></div>
<div class="g"><span>24</span></div>
<div class="g"><span>25</span></div>
<div class="g"><span>26</span></div>
<div class="g act"><span>27</span></div>
<div class="g"><span>28</span></div>
<div class="g"><span>29</span><i class="fw"></i></div>
<div class="g"><span>30</span><i class="fw"></i></div>
<div class="g"><span>31</span></div>
<div class="g"><span>32</span></div>
<div class="g"><span>33</span></div>
<div class="g"><span>34</span></div>
<div class="g"><span>35</span><i class="fw"></i></div>
<div class="g"><span>36</span></div>
<div class="g"><span>37</span></div>
<div class="g"><span>38</span></div>
<div class="g"><span>39</span></div>
<div class="g"><span>40</span></div>
<div class="g"><span>41</span></div>
<div class="g"><span>42</span></div>
</div>
<div id="cursor"></div>
</div>

</div>
<div id="wc"><i style="left:27px"></i><i style="left:54px"></i>
<svg class="abs" style="left:0;top:0" width="102" height="18" viewBox="0 0 102 18"><rect x="8.800" y="8.500" width="10.400" height="3.600" fill="#fff"/><rect x="36.900" y="4.700" width="8.500" height="6.300" fill="#3d5f8f" stroke="#fff" stroke-width="2.200"/><path d="M74.400 3.800l8.200 8.300M82.600 3.800l-8.200 8.300" stroke="#fff" stroke-width="3"/></svg></div>

</body></html>
